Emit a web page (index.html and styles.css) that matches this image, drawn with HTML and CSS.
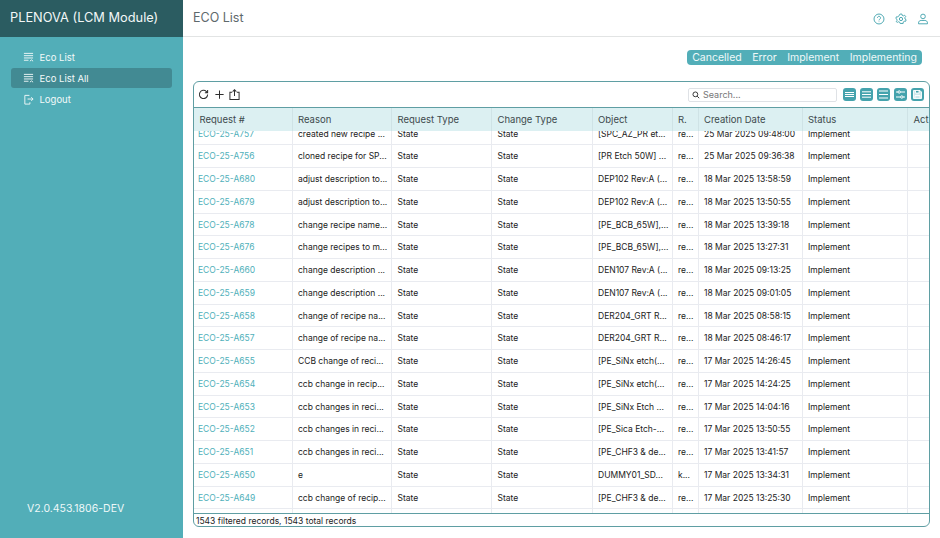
FILE: index.html
```html
<!DOCTYPE html>
<html lang="en">
<head>
<meta charset="utf-8">
<title>ECO List</title>
<link rel="stylesheet" href="styles.css">
</head>
<body>
<svg class="defs" width="0" height="0" aria-hidden="true">
  <symbol id="i-list" viewBox="0 0 12 12">
    <path d="M1 1.5h10M1 4h10M1 6.5h10M1 9h5" fill="none" stroke="currentColor" stroke-width="1"/>
    <path d="M7.5 10l1.7-1.4L11 10" fill="none" stroke="currentColor" stroke-width="1"/>
  </symbol>
</svg>
<div class="app">
  <aside class="sidebar">
    <div class="brand">PLENOVA (LCM Module)</div>
    <nav class="nav">
      <a class="nav-item"><svg class="nav-icon"><use href="#i-list"/></svg>Eco List</a>
      <a class="nav-item active"><svg class="nav-icon"><use href="#i-list"/></svg>Eco List All</a>
      <a class="nav-item"><svg class="nav-icon" viewBox="0 0 12 12"><path d="M7 1.500H2v9.500h5.500V9M5 5.500h6M9 3.500l2 2-2 2" fill="none" stroke="currentColor" stroke-width="1"/></svg>Logout</a>
    </nav>
    <div class="version">V2.0.453.1806-DEV</div>
  </aside>
  <main class="main">
    <header class="topbar">
      <h1 class="title">ECO List</h1>
      <div class="top-icons">
        <svg class="top-icon" viewBox="0 0 14 14"><circle cx="7" cy="7" r="5.800"/><path d="M5.200 5.600a1.800 1.800 0 1 1 2.700 1.600c-.6.4-.9.7-.9 1.400M7 10v.6"/></svg>
        <svg class="top-icon" viewBox="0 0 14 14"><circle cx="7" cy="7" r="1.900"/><path d="M6 1.200h2l.4 1.600 1.300.6 1.500-.8 1.300 1.600-1 1.300.2 1.500 1.300.9-.7 1.900-1.600-.2-1.100 1-.1 1.600H6l-.6-1.500-1.200-.5-1.500.7L1.400 10l1-1.300-.2-1.400L1 6.300l.7-1.900 1.600.2 1-1z"/></svg>
        <svg class="top-icon" viewBox="0 0 14 14"><circle cx="7" cy="4" r="2.700"/><path d="M1.800 12.600v-1.100c0-1.700 1.300-2.800 3-2.800h4.400c1.700 0 3 1.100 3 2.800v1.100z"/></svg>
      </div>
    </header>
    <div class="content">
      <div class="filters">
        <div class="chips"><span>Cancelled</span><span>Error</span><span>Implement</span><span>Implementing</span></div>
      </div>
      <section class="card">
        <div class="toolbar">
          <svg class="tool" viewBox="0 0 12 12"><path d="M10.500 6a4.500 4.500 0 1 1-1.300-3.200L10.500 4.200M10.500 1.200v3H7.500"/></svg>
          <svg class="tool" viewBox="0 0 12 12"><path d="M6 1.500v9M1.500 6h9"/></svg>
          <svg class="tool" viewBox="0 0 12 12"><path d="M3.500 3.500H1v8h10v-8H8.500M6 7.500V.8M4 2.800L6 .8l2 2"/></svg>
          <div class="search">
            <svg class="search-icon" viewBox="0 0 10 10"><circle cx="4.200" cy="4.200" r="3"/><path d="M6.400 6.400L9 9"/></svg>
            <span>Search...</span>
          </div>
          <div class="view-btns">
            <svg class="view-btn" viewBox="0 0 13 13"><rect width="13" height="13" rx="3" fill="currentColor"/><path d="M2 4.500h9M2 6.500h9M2 8.500h9" stroke="#fff" stroke-width="1"/></svg>
            <svg class="view-btn" viewBox="0 0 13 13"><rect width="13" height="13" rx="3" fill="currentColor"/><path d="M2 3.800h9M2 6.500h9M2 9.200h9" stroke="#fff" stroke-width="1"/></svg>
            <svg class="view-btn" viewBox="0 0 13 13"><rect width="13" height="13" rx="3" fill="currentColor"/><path d="M2 3h9M2 6.500h9M2 10h9" stroke="#fff" stroke-width="1"/></svg>
            <svg class="view-btn" viewBox="0 0 13 13"><rect width="13" height="13" rx="3" fill="currentColor"/><path d="M2 4h2M6.500 4H11M2 9h4.500M9 9h2" stroke="#fff" stroke-width="1"/><circle cx="5.200" cy="4" r="1.200" fill="none" stroke="#fff"/><circle cx="7.800" cy="9" r="1.200" fill="none" stroke="#fff"/></svg>
            <svg class="view-btn" viewBox="0 0 13 13"><rect width="13" height="13" rx="3" fill="currentColor"/><path d="M2.500 2.500h6.500l1.500 1.500v6.500h-8zM4.500 2.500v2.500h3.500V2.500M4 10.500V7.500h5v3" fill="#cfe9ec" stroke="#fff" stroke-width=".9"/></svg>
          </div>
        </div>
        <div class="thead">
          <div>Request #</div><div>Reason</div><div>Request Type</div><div>Change Type</div><div>Object</div><div>R.</div><div>Creation Date</div><div>Status</div><div>Act</div>
        </div>
        <div class="tbody">
          <div class="rows">
            <div class="row"><a>ECO-25-A757</a><div>created new recipe ...</div><div>State</div><div>State</div><div>[SPC_AZ_PR et...</div><div>re...</div><div>25 Mar 2025 09:48:00</div><div>Implement</div><div></div></div>
            <div class="row"><a>ECO-25-A756</a><div>cloned recipe for SP...</div><div>State</div><div>State</div><div>[PR Etch 50W] ...</div><div>re...</div><div>25 Mar 2025 09:36:38</div><div>Implement</div><div></div></div>
            <div class="row"><a>ECO-25-A680</a><div>adjust description to...</div><div>State</div><div>State</div><div>DEP102 Rev:A (...</div><div>re...</div><div>18 Mar 2025 13:58:59</div><div>Implement</div><div></div></div>
            <div class="row"><a>ECO-25-A679</a><div>adjust description to...</div><div>State</div><div>State</div><div>DEP102 Rev:A (...</div><div>re...</div><div>18 Mar 2025 13:50:55</div><div>Implement</div><div></div></div>
            <div class="row"><a>ECO-25-A678</a><div>change recipe name...</div><div>State</div><div>State</div><div>[PE_BCB_65W],...</div><div>re...</div><div>18 Mar 2025 13:39:18</div><div>Implement</div><div></div></div>
            <div class="row"><a>ECO-25-A676</a><div>change recipes to m...</div><div>State</div><div>State</div><div>[PE_BCB_65W],...</div><div>re...</div><div>18 Mar 2025 13:27:31</div><div>Implement</div><div></div></div>
            <div class="row"><a>ECO-25-A660</a><div>change description ...</div><div>State</div><div>State</div><div>DEN107 Rev:A (...</div><div>re...</div><div>18 Mar 2025 09:13:25</div><div>Implement</div><div></div></div>
            <div class="row"><a>ECO-25-A659</a><div>change description ...</div><div>State</div><div>State</div><div>DEN107 Rev:A (...</div><div>re...</div><div>18 Mar 2025 09:01:05</div><div>Implement</div><div></div></div>
            <div class="row"><a>ECO-25-A658</a><div>change of recipe na...</div><div>State</div><div>State</div><div>DER204_GRT R...</div><div>re...</div><div>18 Mar 2025 08:58:15</div><div>Implement</div><div></div></div>
            <div class="row"><a>ECO-25-A657</a><div>change of recipe na...</div><div>State</div><div>State</div><div>DER204_GRT R...</div><div>re...</div><div>18 Mar 2025 08:46:17</div><div>Implement</div><div></div></div>
            <div class="row"><a>ECO-25-A655</a><div>CCB change of reci...</div><div>State</div><div>State</div><div>[PE_SiNx etch(...</div><div>re...</div><div>17 Mar 2025 14:26:45</div><div>Implement</div><div></div></div>
            <div class="row"><a>ECO-25-A654</a><div>ccb change in recip...</div><div>State</div><div>State</div><div>[PE_SiNx etch(...</div><div>re...</div><div>17 Mar 2025 14:24:25</div><div>Implement</div><div></div></div>
            <div class="row"><a>ECO-25-A653</a><div>ccb changes in reci...</div><div>State</div><div>State</div><div>[PE_SiNx Etch ...</div><div>re...</div><div>17 Mar 2025 14:04:16</div><div>Implement</div><div></div></div>
            <div class="row"><a>ECO-25-A652</a><div>ccb changes in reci...</div><div>State</div><div>State</div><div>[PE_Sica Etch-...</div><div>re...</div><div>17 Mar 2025 13:50:55</div><div>Implement</div><div></div></div>
            <div class="row"><a>ECO-25-A651</a><div>ccb changes in reci...</div><div>State</div><div>State</div><div>[PE_CHF3 &amp; de...</div><div>re...</div><div>17 Mar 2025 13:41:57</div><div>Implement</div><div></div></div>
            <div class="row"><a>ECO-25-A650</a><div>e</div><div>State</div><div>State</div><div>DUMMY01_SD...</div><div>k...</div><div>17 Mar 2025 13:34:31</div><div>Implement</div><div></div></div>
            <div class="row"><a>ECO-25-A649</a><div>ccb change of recip...</div><div>State</div><div>State</div><div>[PE_CHF3 &amp; de...</div><div>re...</div><div>17 Mar 2025 13:25:30</div><div>Implement</div><div></div></div>
            <div class="row"><div></div><div></div><div></div><div></div><div></div><div></div><div></div><div></div><div></div></div>
          </div>
        </div>
        <div class="tfoot">1543 filtered records, 1543 total records</div>
      </section>
    </div>
  </main>
</div>
</body>
</html>
```
FILE: styles.css
```css
:root {
  --teal: #52aeb8;
  --dark: #2b5c61;
  --cols: 98.5px 99.5px 100px 100.5px 80px 26px 104px 105.5px 1fr;
}
* { box-sizing: border-box; }
html, body { height: 100%; }
body {
  margin: 0;
  overflow: hidden;
  background: #fff;
  color: #222;
  font-family: Inter, "Noto Sans", sans-serif;
}
.defs { position: absolute; }
.app { display: flex; height: 538px; }

.sidebar {
  width: 183px;
  flex: none;
  display: flex;
  flex-direction: column;
  background: var(--teal);
  color: #fff;
}
.brand {
  height: 37px;
  padding-left: 10px;
  background: var(--dark);
  color: #f2f7f7;
  font-size: 12.8px;
  line-height: 36px;
  white-space: nowrap;
}
.nav {
  flex: 1;
  display: flex;
  flex-direction: column;
  gap: 1px;
  padding: 10px 11px 0 10.5px;
}
.nav-item {
  display: flex;
  align-items: center;
  height: 20px;
  padding: 1px 0 0 12px;
  border-radius: 3px;
  font-size: 9.5px;
  color: #f3fafa;
}
.nav-item.active { background: #428a93; }
.nav-icon { width: 11px; height: 11px; margin-right: 6px; flex: none; }
.version {
  height: 36px;
  padding-left: 27px;
  font-size: 10.5px;
  color: #eef8f8;
}

.main { flex: 1; min-width: 0; display: flex; flex-direction: column; }
.topbar {
  height: 37px;
  flex: none;
  display: flex;
  align-items: center;
  justify-content: space-between;
  padding: 0 11px 2px 10px;
  border-bottom: 1px solid #e2e4e4;
}
.title { margin: 0; font-size: 12.5px; font-weight: 400; color: #5e696c; }
.top-icons { display: flex; gap: 10px; margin-top: 3px; }
.top-icon {
  width: 12px;
  height: 12px;
  fill: none;
  stroke: #46a5af;
  stroke-width: 1.1;
}

.content {
  flex: 1;
  min-height: 0;
  display: flex;
  flex-direction: column;
  padding: 13px 10px 11px;
}
.filters { display: flex; justify-content: flex-end; padding-right: 8px; margin-bottom: 16px; }
.chips {
  display: flex;
  gap: 10.5px;
  height: 15px;
  padding: 0 5px;
  border-radius: 4px;
  background: var(--teal);
  color: #f0f9f9;
  font-size: 10.5px;
  line-height: 16px;
}
.card {
  flex: 1;
  min-height: 0;
  display: flex;
  flex-direction: column;
  border: 1px solid #5f9ea3;
  border-radius: 6px;
  overflow: hidden;
}
.toolbar {
  height: 25px;
  flex: none;
  display: flex;
  align-items: center;
  padding: 0 5px 0 4px;
  gap: 4.5px;
}
.tool {
  width: 11px;
  height: 11px;
  fill: none;
  stroke: #2e2e2e;
  stroke-width: 1.1;
}
.search {
  display: flex;
  align-items: center;
  width: 149px;
  height: 14px;
  margin-left: auto;
  margin-right: 1.5px;
  padding-left: 3px;
  border: 1px solid #dfe2e6;
  border-radius: 2px;
  color: #777;
  font-size: 9px;
}
.search-icon {
  width: 8px;
  height: 8px;
  margin-right: 3px;
  fill: none;
  stroke: #333;
  stroke-width: 1.2;
}
.view-btns { display: flex; gap: 4px; color: #45a3ad; }
.view-btn { width: 13px; height: 13px; }

.thead, .row {
  display: grid;
  grid-template-columns: var(--cols);
}
.thead {
  height: 24px;
  flex: none;
  border-top: 1px solid #5f9ea3;
  background: #dcf0f2;
  color: #3d4a4d;
  font-size: 9.5px;
  line-height: 23px;
}
.thead > div {
  padding-left: 5.5px;
  border-right: 1px solid #cfe3e6;
  white-space: nowrap;
  overflow: hidden;
}
.thead > div:last-child { border-right: 0; }
.tbody { flex: 1; min-height: 0; overflow: hidden; }
.rows { margin-top: -8.5px; }
.row {
  height: 22.75px;
  grid-template-rows: 100%;
  border-bottom: 1px solid #e9ebf0;
  font-size: 8.5px;
  line-height: 21.75px;
  color: #222;
}
.row > * {
  padding: 1px 0 0 5.5px;
  border-right: 1px solid #e9ebf0;
  white-space: nowrap;
  overflow: hidden;
}
.row > *:first-child { padding-left: 4px; }
.row > *:last-child { border-right: 0; }
.row > a { color: #4fb0ba; }
.tfoot {
  height: 13px;
  flex: none;
  padding: 1px 0 0 2px;
  border-top: 1px solid #5f9ea3;
  font-size: 8.5px;
  line-height: 12px;
  color: #222;
}
```
